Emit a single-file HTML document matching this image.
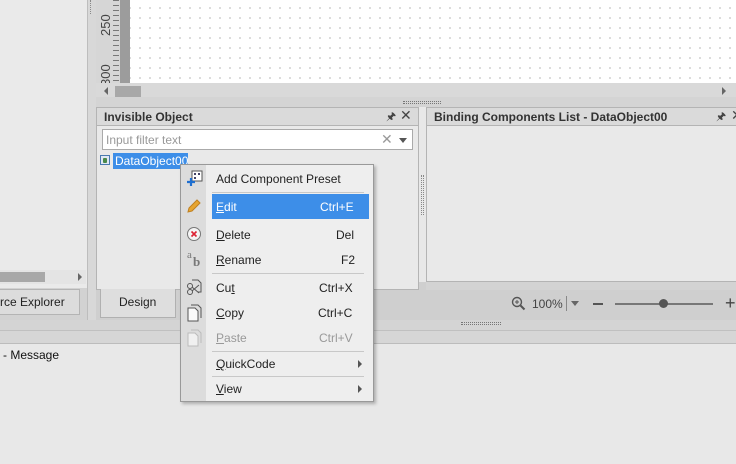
<!DOCTYPE html>
<html><head><meta charset="utf-8"><style>
*{margin:0;padding:0;box-sizing:border-box}
body{width:736px;height:464px;overflow:hidden;background:#e8e8e8;font-family:"Liberation Sans",sans-serif;font-size:12px;color:#222;position:relative}
.a{position:absolute}
.t{position:absolute;white-space:nowrap}
.mi{position:absolute;left:216px;font-size:12px;color:#222}
.sc{position:absolute;right:8px;font-size:12px;color:#222}
.sep{position:absolute;left:212px;width:152px;height:1px;background:#c8c8c8}
u{text-decoration:underline}
</style></head><body>
<!-- left panel -->
<div class="a" style="left:0;top:0;width:88px;height:290px;background:#eaeaea;border-right:1px solid #bdbdbd"></div>
<div class="a" style="left:0;top:270px;width:86px;height:14px;background:#e4e4e4"></div>
<div class="a" style="left:0;top:272px;width:45px;height:10px;background:#a8a8a8"></div>
<div class="a" style="left:78px;top:273px;width:0;height:0;border-left:4px solid #666;border-top:4px solid transparent;border-bottom:4px solid transparent"></div>
<div class="a" style="left:0;top:288px;width:88px;height:32px;background:#d2d2d2;border-right:1px solid #bdbdbd"></div>
<div class="a" style="left:0;top:289px;width:80px;height:26px;background:#dcdcdc;border:1px solid #b4b4b4;border-left:none"></div>
<div class="t" style="left:0;top:295px;font-size:12px">rce Explorer</div>
<!-- divider -->
<div class="a" style="left:88px;top:0;width:8px;height:320px;background:#d8d8d8"></div>
<div class="a" style="left:90px;top:0;width:2px;height:14px;border-left:1px dotted #888"></div>
<!-- ruler -->
<div class="a" style="left:96px;top:0;width:24px;height:83px;background:#d6d6d6"></div>
<div class="a" style="left:120px;top:0;width:10px;height:83px;background:#9c9c9c"></div>
<div class="t" style="left:98px;top:16px;font-size:13px;color:#444;transform:rotate(-90deg);transform-origin:left top;top:36px">250</div>
<div class="t" style="left:98px;top:86px;font-size:13px;color:#444;transform:rotate(-90deg);transform-origin:left top">300</div>
<div class="a" style="left:113px;top:0;width:6px;height:83px;background:repeating-linear-gradient(#777 0 1px,transparent 1px 5px)"></div>
<!-- canvas -->
<div class="a" style="left:130px;top:0;width:606px;height:83px;background-color:#fff;background-image:radial-gradient(#d0d0d0 0.8px,transparent 1px);background-size:10px 10px;background-position:5px 3px"></div>
<!-- hscroll -->
<div class="a" style="left:96px;top:83px;width:640px;height:14px;background:#d9d9d9"></div>
<div class="a" style="left:104px;top:87px;width:0;height:0;border-right:4px solid #666;border-top:4px solid transparent;border-bottom:4px solid transparent"></div>
<div class="a" style="left:115px;top:86px;width:26px;height:11px;background:#a8a8a8"></div>
<div class="a" style="left:722px;top:87px;width:0;height:0;border-left:4px solid #666;border-top:4px solid transparent;border-bottom:4px solid transparent"></div>
<div class="a" style="left:96px;top:97px;width:640px;height:10px;background:#d4d4d4"></div>
<div class="a" style="left:403px;top:101px;width:38px;height:3px;border-top:1px dotted #777;border-bottom:1px dotted #777"></div>
<!-- Invisible Object panel -->
<div class="a" style="left:96px;top:107px;width:323px;height:183px;background:#e9e9e9;border:1px solid #b4b4b4"></div>
<div class="a" style="left:97px;top:108px;width:321px;height:18px;background:#dadada;border-bottom:1px solid #b4b4b4"></div>
<div class="t" style="left:104px;top:110px;font-weight:bold;font-size:12px;color:#333">Invisible Object</div>
<div class="t" style="left:386px;top:108px;font-size:11px;color:#444">🖈</div>
<div class="t" style="left:400px;top:107px;font-size:14px;color:#444">✕</div>
<div class="a" style="left:102px;top:129px;width:311px;height:21px;background:#fff;border:1px solid #aaa"></div>
<div class="t" style="left:106px;top:133px;color:#999">Input filter text</div>
<div class="t" style="left:381px;top:131px;font-size:14px;color:#999">✕</div>
<div class="a" style="left:399px;top:138px;border-top:5px solid #555;border-left:4px solid transparent;border-right:4px solid transparent"></div>
<div class="a" style="left:100px;top:155px;width:10px;height:10px;border:1px solid #4a7ab0;background:#e0e8f4"></div>
<div class="a" style="left:103px;top:158px;width:4px;height:5px;background:#4a8a4a;border-radius:1px"></div>
<div class="a" style="left:113px;top:153px;width:75px;height:16px;background:#3d8ee8"></div>
<div class="t" style="left:115px;top:154px;color:#fff">DataObject00</div>
<div class="a" style="left:421px;top:175px;width:3px;height:40px;border-left:1px dotted #888;border-right:1px dotted #888"></div>
<!-- Binding panel -->
<div class="a" style="left:426px;top:107px;width:310px;height:175px;background:#e9e9e9;border:1px solid #b4b4b4;border-right:none"></div>
<div class="a" style="left:427px;top:108px;width:309px;height:18px;background:#dadada;border-bottom:1px solid #b4b4b4"></div>
<div class="t" style="left:434px;top:110px;font-weight:bold;font-size:12px;color:#333">Binding Components List - DataObject00</div>
<div class="t" style="left:716px;top:108px;font-size:11px;color:#444">🖈</div>
<div class="t" style="left:731px;top:107px;font-size:14px;color:#444">✕</div>
<!-- bottom tab strip -->
<div class="a" style="left:96px;top:282px;width:640px;height:38px;background:#cfcfcf"></div>
<div class="a" style="left:96px;top:282px;width:323px;height:8px;background:#e9e9e9;border:1px solid #b4b4b4;border-top:none"></div>
<div class="a" style="left:100px;top:289px;width:76px;height:29px;background:#dedede;border:1px solid #b0b0b0;border-top:none"></div>
<div class="t" style="left:119px;top:295px;font-size:12px">Design</div>
<div class="a" style="left:426px;top:281px;width:310px;height:9px;background:#d3d3d3;border-top:1px solid #b4b4b4"></div>
<svg class="a" style="left:511px;top:296px" width="16" height="16"><circle cx="6" cy="6" r="4.5" fill="none" stroke="#555" stroke-width="1.4"/><path d="M4 6h4M6 4v4" stroke="#555"/><path d="M9.5 9.5l4 4" stroke="#555" stroke-width="2"/></svg>
<div class="t" style="left:532px;top:297px;font-size:12px;color:#444">100%</div>
<div class="a" style="left:566px;top:296px;width:1px;height:15px;background:#888"></div>
<div class="a" style="left:571px;top:301px;border-top:5px solid #666;border-left:4px solid transparent;border-right:4px solid transparent"></div>
<div class="a" style="left:593px;top:303px;width:10px;height:2px;background:#555"></div>
<div class="a" style="left:615px;top:303px;width:98px;height:2px;background:#777"></div>
<div class="a" style="left:659px;top:299px;width:9px;height:9px;border-radius:50%;background:#555"></div>
<div class="t" style="left:725px;top:293px;font-size:18px;color:#444">+</div>
<div class="a" style="left:96px;top:320px;width:640px;height:10px;background:#d4d4d4"></div>
<div class="a" style="left:461px;top:322px;width:40px;height:3px;border-top:1px dotted #777;border-bottom:1px dotted #777"></div>
<div class="a" style="left:0;top:320px;width:96px;height:10px;background:#d4d4d4"></div>
<div class="a" style="left:0;top:330px;width:736px;height:14px;background:#d6d6d6;border-top:1px solid #c0c0c0;border-bottom:1px solid #bcbcbc"></div>
<div class="t" style="left:3px;top:348px;font-size:12px;color:#111">- Message</div>
<!-- context menu -->
<div class="a" style="left:180px;top:164px;width:194px;height:238px;background:#eeeeee;border:1px solid #999;box-shadow:2px 2px 3px rgba(0,0,0,.25)"></div>
<div class="a" style="left:181px;top:165px;width:25px;height:236px;background:#dcdcdc"></div>
<div class="mi" style="top:172px">Add Component Preset</div>
<div class="sep" style="top:192px"></div>
<div class="a" style="left:212px;top:194px;width:157px;height:25px;background:#3d8ee8"></div>
<div class="mi" style="top:200px;color:#fff"><u>E</u>dit</div>
<div class="t" style="left:320px;top:200px;color:#fff">Ctrl+E</div>
<div class="mi" style="top:228px"><u>D</u>elete</div><div class="t" style="left:336px;top:228px">Del</div>
<div class="mi" style="top:253px"><u>R</u>ename</div><div class="t" style="left:341px;top:253px">F2</div>
<div class="sep" style="top:273px"></div>
<div class="mi" style="top:281px">Cu<u>t</u></div><div class="t" style="left:319px;top:281px">Ctrl+X</div>
<div class="mi" style="top:306px"><u>C</u>opy</div><div class="t" style="left:318px;top:306px">Ctrl+C</div>
<div class="mi" style="top:331px;color:#999"><u>P</u>aste</div><div class="t" style="left:319px;top:331px;color:#999">Ctrl+V</div>
<div class="sep" style="top:351px"></div>
<div class="mi" style="top:357px"><u>Q</u>uickCode</div>
<div class="a" style="left:358px;top:360px;border-left:4px solid #555;border-top:4px solid transparent;border-bottom:4px solid transparent"></div>
<div class="sep" style="top:376px"></div>
<div class="mi" style="top:382px"><u>V</u>iew</div>
<div class="a" style="left:358px;top:385px;border-left:4px solid #555;border-top:4px solid transparent;border-bottom:4px solid transparent"></div>
<!-- icons -->
<svg class="a" style="left:186px;top:170px" width="18" height="18"><rect x="6" y="1" width="10" height="10" fill="#fff" stroke="#555"/><rect x="8" y="3" width="2" height="2" fill="#446"/><rect x="12" y="3" width="2" height="2" fill="#446"/><rect x="8" y="7" width="2" height="2" fill="#446"/><path d="M1 12h8M5 8v8" stroke="#1f6fd0" stroke-width="2.2"/></svg>
<svg class="a" style="left:186px;top:198px" width="16" height="16"><path d="M2 14l1-4 8-8 3 3-8 8z" fill="#e6a530" stroke="#c08020"/></svg>
<svg class="a" style="left:186px;top:226px" width="16" height="16"><circle cx="8" cy="8" r="6.5" fill="#f4f4f4" stroke="#777"/><path d="M5.5 5.5l5 5M10.5 5.5l-5 5" stroke="#d23" stroke-width="1.6"/></svg>
<div class="t" style="left:187px;top:249px;font-family:'Liberation Serif',serif;font-size:11px;color:#777">a</div>
<div class="t" style="left:193px;top:254px;font-family:'Liberation Serif',serif;font-size:13px;color:#777;font-weight:bold">b</div>
<svg class="a" style="left:186px;top:279px" width="16" height="18"><path d="M6 1h6l3 3v9h-3" fill="none" stroke="#555"/><circle cx="4" cy="13" r="2.5" fill="none" stroke="#555"/><circle cx="4" cy="7" r="2.5" fill="none" stroke="#555"/><path d="M6 12l7-6M6 8l7 6" stroke="#555"/></svg>
<svg class="a" style="left:187px;top:304px" width="16" height="18"><path d="M4 1h7l3 3v10" fill="none" stroke="#555"/><path d="M1 4h7l3 3v10H1z" fill="#fafafa" stroke="#555"/></svg>
<svg class="a" style="left:187px;top:329px" width="16" height="18"><path d="M4 1h7l3 3v10" fill="none" stroke="#bbb"/><path d="M1 4h7l3 3v10H1z" fill="#f0f0f0" stroke="#bbb"/></svg>
</body></html>
